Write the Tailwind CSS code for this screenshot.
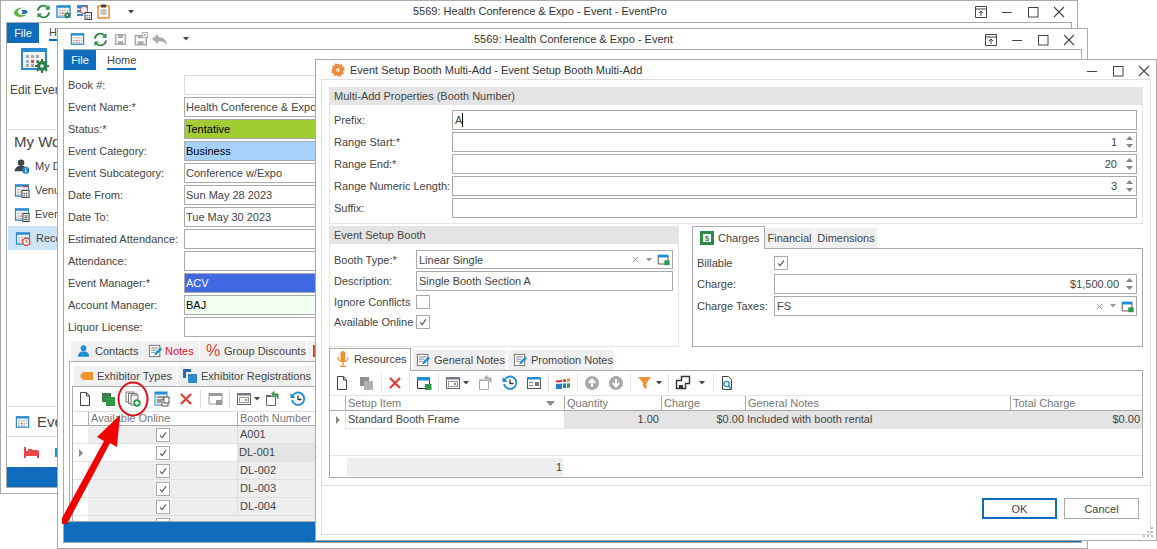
<!DOCTYPE html>
<html><head><meta charset="utf-8"><title>Event Setup Booth Multi-Add</title>
<script src="https://cdn.jsdelivr.net/npm/@tailwindcss/browser@4"></script></head>
<body class="bg-white">
<svg class="hidden" xmlns="http://www.w3.org/2000/svg">
<symbol id="cal" viewBox="0 0 16 16"><rect x="1" y="2" width="14" height="12" fill="#f4f4f4" stroke="#2a8ccf" stroke-width="1.4"/><rect x="1" y="2" width="14" height="2" fill="#2a8ccf"/><path d="M3 6h2v1.500H3zM6 6h2v1.500H6zM9 6h2v1.500H9zM12 6h1.500v1.500H12zM3 9h2v1.500H3zM9 9h2v1.500H9zM12 9h1.500v1.500H12zM3 11.500h2V13H3zM6 11.500h2V13H6zM9 11.500h2V13H9z" fill="#b8b8b8"/><path d="M6 9h2v1.500H6z" fill="#e2534e"/></symbol>
<symbol id="calgear" viewBox="0 0 16 16"><use href="#cal"/><circle cx="12" cy="12" r="2.600" fill="#2e7d46"/><path d="M12 8.500v7M8.500 12h7M9.700 9.700l4.600 4.600M14.300 9.700l-4.600 4.600" stroke="#2e7d46" stroke-width="1.200"/><circle cx="12" cy="12" r="1" fill="#fff"/></symbol>
<symbol id="calsched" viewBox="0 0 16 16"><path d="M1 1h11v3H1zM1 6h8v2H1zM1 10h6v2H1z" fill="#2a8ccf"/><path d="M1 4.500h11M1 8.500h7" stroke="#9cc9ea"/><circle cx="8" cy="6" r="3.500" fill="#fff" stroke="#e2534e" stroke-width="1.100"/><rect x="9" y="8.500" width="6.500" height="7" fill="#fff" stroke="#444"/><path d="M10.500 11h1.200v1.200h-1.200zM12.800 11H14v1.200h-1.200zM10.500 13.200h1.200v1.200h-1.200zM12.800 13.200H14v1.200h-1.200z" fill="#444"/></symbol>
<symbol id="calgrid" viewBox="0 0 16 16"><use href="#cal"/><rect x="8" y="8" width="7.500" height="7.500" fill="#fff" stroke="#444"/><path d="M9.500 10.500h1.500v1.500H9.500zM12.200 10.500h1.500v1.500h-1.500zM9.500 13h1.500v1.500H9.500zM12.200 13h1.500v1.500h-1.500z" fill="#444"/><rect x="9" y="3" width="6" height="1.500" fill="#e2342b"/></symbol>
<symbol id="callist" viewBox="0 0 16 16"><use href="#cal"/><rect x="9" y="7" width="6.500" height="8.500" fill="#fff" stroke="#333"/><path d="M10.500 9.500H14M10.500 11.500H14M10.500 13.500H14" stroke="#333"/></symbol>
<symbol id="calclock" viewBox="0 0 16 16"><use href="#cal"/><circle cx="11.500" cy="11.500" r="3.800" fill="#fff" stroke="#e2342b" stroke-width="1.300"/><path d="M11.500 9.500v2.200h2" fill="none" stroke="#e2342b"/></symbol>
<symbol id="refresh" viewBox="0 0 16 16"><path d="M2 7a6 6 0 0 1 10.300-3.300M14 9a6 6 0 0 1-10.300 3.300" fill="none" stroke="#2e8b47" stroke-width="2"/><path d="M14.500 1v5h-5zM1.500 15v-5h5z" fill="#2e8b47"/></symbol>
<symbol id="save" viewBox="0 0 16 16"><path d="M2 2h12v12H2z" fill="none" stroke="#aaa" stroke-width="1.800"/><path d="M5 2h6v4H5zM4.500 10h7v4h-7z" fill="#aaa"/></symbol>
<symbol id="savex" viewBox="0 0 16 16"><path d="M1.500 4h12.500v10.500H1.500z" fill="none" stroke="#aaa" stroke-width="1.800"/><path d="M4 4h5v3H4zM4 10.500h7v4H4z" fill="#aaa"/><rect x="9.500" y="0.500" width="6" height="6" fill="#fff" stroke="#aaa"/><path d="M11 2l3 3M14 2l-3 3" stroke="#aaa"/></symbol>
<symbol id="doc" viewBox="0 0 16 16"><path d="M3.500 1.500h6l3 3.500v9.500h-9z" fill="#fff" stroke="#444"/><path d="M9.500 1.500V5h3" fill="none" stroke="#444"/></symbol>
<symbol id="sqg" viewBox="0 0 16 16"><rect x="2" y="2" width="9" height="9" fill="#3f7f4b"/><rect x="6" y="6" width="9" height="9" fill="#2e9a48"/></symbol>
<symbol id="sqgrey" viewBox="0 0 16 16"><rect x="2" y="2" width="9" height="9" fill="#8f8f8f"/><rect x="6" y="6" width="9" height="9" fill="#b1b1b1"/></symbol>
<symbol id="multi" viewBox="0 0 16 16"><rect x="1" y="1" width="8" height="10" fill="#fff" stroke="#777"/><rect x="3.500" y="2.500" width="8" height="10" fill="#fff" stroke="#777"/><rect x="6" y="4" width="7" height="10" fill="#eee" stroke="#777"/><circle cx="12" cy="12" r="3.700" fill="#2e9a48"/><path d="M10 12h4M12 10v4" stroke="#fff" stroke-width="1.300"/></symbol>
<symbol id="calcopy" viewBox="0 0 16 16"><rect x="1" y="1" width="12" height="13" fill="#eee" stroke="#2a8ccf"/><rect x="1" y="1" width="12" height="2.500" fill="#2a8ccf"/><path d="M3 5h8v2H3zM3 8h4v4H3z" fill="#999"/><rect x="8" y="8" width="6" height="7" fill="#fff" stroke="#555"/><rect x="10" y="6" width="5" height="6" fill="#fff" stroke="#555"/></symbol>
<symbol id="x" viewBox="0 0 16 16"><path d="M3 3l10 10M13 3L3 13" stroke="#e0403a" stroke-width="2.300" fill="none"/></symbol>
<symbol id="wingrey" viewBox="0 0 16 16"><path d="M2 2.500h13V13H2z" fill="#fff" stroke="#999"/><path d="M2 2h13v3H2z" fill="#999"/><rect x="9" y="9" width="6" height="5" fill="#999"/></symbol>
<symbol id="wingreen" viewBox="0 0 16 16"><path d="M1.500 3.500h12v10h-12z" fill="#fff" stroke="#333"/><path d="M1 2h13v3.500H1z" fill="#1f8dd6"/><rect x="9" y="9" width="6.500" height="6" fill="#2e9a48"/></symbol>
<symbol id="windrop" viewBox="0 0 16 16"><rect x="1.500" y="2.500" width="13" height="11" fill="#fff" stroke="#666"/><rect x="1" y="2" width="14" height="2.500" fill="#778"/><rect x="3.500" y="6.500" width="9" height="5" fill="none" stroke="#999"/><rect x="9" y="8" width="2" height="2" fill="#888"/></symbol>
<symbol id="folder" viewBox="0 0 16 16"><path d="M1.500 5.500h9v9h-9z" fill="#fff" stroke="#666"/><path d="M1 4h5v2H1z" fill="#666"/><path d="M13 8V3H9M9 0.500L6.500 3 9 5.500z" fill="#2e9a48" stroke="#2e9a48"/></symbol>
<symbol id="folderg" viewBox="0 0 16 16"><path d="M1.500 5.500h9v9h-9z" fill="#fff" stroke="#aaa"/><path d="M1 4h5v2H1z" fill="#bbb"/><path d="M13 8V3H9M9 0.500L6.500 3 9 5.500z" fill="#aaa" stroke="#aaa"/></symbol>
<symbol id="hist" viewBox="0 0 16 16"><path d="M2.500 5A6.200 6.200 0 1 1 2 9" fill="none" stroke="#1f8dd6" stroke-width="1.800"/><path d="M0.500 2v5h5z" fill="#1f8dd6"/><path d="M8 4.500V8.500h3.500" fill="none" stroke="#333" stroke-width="1.300"/></symbol>
<symbol id="details" viewBox="0 0 16 16"><rect x="1.500" y="2.500" width="13" height="11" fill="#fff" stroke="#555"/><rect x="1" y="2" width="14" height="2.500" fill="#2a8ccf"/><path d="M3 7h4v1H3zM3 10h4v1H3zM9 7h4v4H9z" fill="#777"/></symbol>
<symbol id="blocks" viewBox="0 0 16 16"><path d="M1 9l6-.5V14H1z" fill="#2a7fc4"/><path d="M8 8.500l3-.3V13H8z" fill="#2a7fc4"/><path d="M1 7.500V5.500L7 5v2z" fill="#d9342b"/><path d="M8 7V4.500l3-.3V6.700z" fill="#d9342b"/><path d="M12 13V8.500l3-.3V12.500z" fill="#2e9a48"/><path d="M12 7V3.500l3-.3V6.500z" fill="#ee9330"/></symbol>
<symbol id="up" viewBox="0 0 16 16"><circle cx="8" cy="8" r="7" fill="#a8a8a8"/><path d="M8 12V5M4.800 8L8 4.500 11.200 8" fill="none" stroke="#fff" stroke-width="2"/></symbol>
<symbol id="down" viewBox="0 0 16 16"><circle cx="8" cy="8" r="7" fill="#a8a8a8"/><path d="M8 4v7M4.800 8L8 11.500 11.200 8" fill="none" stroke="#fff" stroke-width="2"/></symbol>
<symbol id="filter" viewBox="0 0 16 16"><path d="M1 2h13L9.500 8v6l-3.500-2V8z" fill="#ee9330"/></symbol>
<symbol id="layout" viewBox="0 0 16 16"><path d="M1.500 5.500H6.500V1.500h8v7h-4v5h-9z" fill="none" stroke="#333" stroke-width="1.400"/><path d="M4 10h4v3.500H4z" fill="#333"/></symbol>
<symbol id="search" viewBox="0 0 16 16"><path d="M3.500 1.500h6l3 3v10h-9z" fill="#fff" stroke="#444"/><circle cx="7.500" cy="9" r="2.600" fill="none" stroke="#1f8dd6" stroke-width="1.300"/><path d="M9.500 11l3 3" stroke="#1f8dd6" stroke-width="1.600"/></symbol>
<symbol id="caret" viewBox="0 0 6 4"><path d="M0 0h6L3 3.500z" fill="#444"/></symbol>
<symbol id="caretg" viewBox="0 0 6 4"><path d="M0 0h6L3 3.500z" fill="#999"/></symbol>
<symbol id="notes" viewBox="0 0 16 16"><rect x="1.500" y="1.500" width="12" height="13" fill="#fff" stroke="#666"/><path d="M3.500 4.500h8M3.500 7h6M3.500 9.500h4" stroke="#777"/><path d="M7 13l1-3 6-6 2 2-6 6z" fill="#1f8dd6"/></symbol>
<symbol id="user" viewBox="0 0 16 16"><circle cx="8" cy="4.500" r="3.500" fill="#1f8dd6"/><path d="M1 15c0-4 3-6 4.500-6.500h5C12.500 9 15 11 15 15z" fill="#1f8dd6"/></symbol>
<symbol id="userinfo" viewBox="0 0 16 16"><circle cx="7" cy="4" r="3.500" fill="#444"/><path d="M0 13c0-3 3-5 4.500-5.500h5c1 .3 2 1 2.500 2V13z" fill="#444"/><circle cx="12" cy="12" r="3.800" fill="#1f7fc4"/><path d="M12 9.800v1M12 11.500v3" stroke="#fff" stroke-width="1.200"/></symbol>
<symbol id="wbtn" viewBox="0 0 12 12"><path d="M.5.500h11v11H.5z" fill="none" stroke="#444"/><path d="M0 3h12" stroke="#444"/><path d="M6 10V5M4 7l2-2 2 2" fill="none" stroke="#444"/></symbol>
<symbol id="close" viewBox="0 0 12 12"><path d="M1 1l10 10M11 1L1 11" stroke="#444" fill="none" stroke-width="1.100"/></symbol>
<symbol id="max" viewBox="0 0 12 12"><rect x="1.500" y="1.500" width="9.500" height="9.500" fill="none" stroke="#444"/></symbol>
<symbol id="min" viewBox="0 0 12 12"><path d="M1 6.500h10" stroke="#444"/></symbol>
<symbol id="check" viewBox="0 0 14 14"><path d="M3.500 7.500l2.500 2.500 4.500-6" fill="none" stroke="#555" stroke-width="1.300"/></symbol>
</svg>

<div class="relative w-[1157px] h-[549px] overflow-hidden text-[11px] leading-[14px] text-[#444] font-['Liberation_Sans','Noto_Sans',sans-serif]">

<!-- Back window -->
<section class="absolute left-0 top-0 w-[1078px] h-[494px] bg-white border border-[#aaa] flex flex-col">
  <header class="h-[21px] relative flex items-center shrink-0">
    <svg class="w-[16px] h-[12px] ml-[12px]" viewBox="0 0 16 12"><path d="M1 7c0-4 6-6 11-5C7 2 4 4 5 7c1 2 6 3 9 1-3 4-12 4-13-1z" fill="#5bb13c"/><path d="M8 4h5l2 2-3 2H8l2-2z" fill="#1f6cb0"/></svg>
    <svg class="w-[15px] h-[15px] ml-[7px]"><use href="#refresh"/></svg>
    <svg class="w-[15px] h-[15px] ml-[5px]"><use href="#calgear"/></svg>
    <svg class="w-[16px] h-[16px] ml-[5px]"><use href="#calsched"/></svg>
    <svg class="w-[13px] h-[15px] ml-[5px]" viewBox="0 0 13 15"><rect x="1" y="2" width="11" height="12" fill="#fff" stroke="#ee8a2c" stroke-width="1.500"/><rect x="4" y="0.500" width="5" height="3" fill="#444"/><path d="M3.500 6h6M3.500 8h6M3.500 10h6" stroke="#888"/></svg>
    <svg class="w-[6px] h-[4px] ml-[18px]"><use href="#caret"/></svg>
    <span class="absolute left-[412px] top-[3px] text-[#333]">5569: Health Conference &amp; Expo - Event - EventPro</span>
    <svg class="absolute left-[974px] top-[5px] w-[12px] h-[12px]"><use href="#wbtn"/></svg>
    <svg class="absolute left-[1000px] top-[5px] w-[12px] h-[12px]"><use href="#min"/></svg>
    <svg class="absolute left-[1026px] top-[5px] w-[12px] h-[12px]"><use href="#max"/></svg>
    <svg class="absolute left-[1052px] top-[5px] w-[12px] h-[12px]"><use href="#close"/></svg>
  </header>
  <div class="flex-1 mx-[5px] mb-[5px] border border-[#aaa] flex flex-col">
    <nav class="h-[20px] flex items-center shrink-0">
      <span class="w-[32px] h-[20px] bg-[#0f6cbd] text-white flex items-center justify-center">File</span>
      <span class="ml-[10px] border-b-2 border-[#0f6cbd]">Home</span>
    </nav>
    <div class="h-[87px] border-b border-[#ddd] shrink-0 pl-[3px]">
      <svg class="w-[28px] h-[26px] ml-[11px] mt-[5px]" viewBox="0 0 28 26"><rect x="1" y="1" width="24" height="20" fill="#f2f2f2" stroke="#2a8ccf" stroke-width="2"/><rect x="1" y="1" width="24" height="3" fill="#2a8ccf"/><path d="M5 7h3v3H5zM10 7h3v3h-3zM15 7h3v3h-3zM5 12h3v3H5zM15 12h3v3h-3zM5 16h3v3H5zM10 16h3v3h-3z" fill="#aaa"/><path d="M10 12h3v3h-3z" fill="#e2534e"/><circle cx="21" cy="18" r="5" fill="#2e7d46"/><path d="M21 11v14M14 18h14M16 13l10 10M26 13L16 23" stroke="#2e7d46" stroke-width="2"/><circle cx="21" cy="18" r="1.800" fill="#fff"/></svg>
      <div class="text-[12px] mt-[9px] whitespace-nowrap">Edit Event</div>
    </div>
    <div class="text-[15px] leading-[18px] pl-[7px] mt-[3px] text-[#444]">My Work</div>
    <ul class="mt-[3px]">
      <li class="h-[24px] flex items-center pl-[7px] gap-[5px]"><svg class="w-[16px] h-[15px]"><use href="#userinfo"/></svg>My Dashboard</li>
      <li class="h-[24px] flex items-center pl-[7px] gap-[5px]"><svg class="w-[16px] h-[15px]"><use href="#calgrid"/></svg>Venue</li>
      <li class="h-[24px] flex items-center pl-[7px] gap-[5px]"><svg class="w-[16px] h-[15px]"><use href="#callist"/></svg>Events</li>
      <li class="h-[24px] flex items-center pl-[7px] gap-[5px] bg-[#cde4f6] ml-[1px]"><svg class="w-[16px] h-[15px]"><use href="#calclock"/></svg>Recent</li>
    </ul>
    <div class="mt-auto border-t border-[#ddd] h-[30px] flex items-center pl-[8px] gap-[7px] text-[15px]"><svg class="w-[15px] h-[14px]"><use href="#cal"/></svg>Event</div>
    <div class="border-t border-[#ddd] h-[31px] flex items-center pl-[17px]"><svg class="w-[15px] h-[13px]" viewBox="0 0 15 13"><path d="M0 1h2v4h2V3h4l1 1h4c1 0 2 1 2 2v6h-2v-2H2v2H0z" fill="#e8484a"/></svg><span class="w-[2px] h-[9px] bg-[#1f8dd6] ml-[16px]"></span></div>
    <div class="h-[20px] bg-[#0f6cbd] shrink-0"></div>
  </div>
</section>

<!-- Event window -->
<section class="absolute left-[57px] top-[28px] w-[1031px] h-[521px] bg-white border border-[#aaa] flex flex-col">
  <header class="h-[20px] relative flex items-center shrink-0">
    <svg class="w-[15px] h-[14px] ml-[12px]"><use href="#cal"/></svg>
    <svg class="w-[15px] h-[15px] ml-[8px]"><use href="#refresh"/></svg>
    <svg class="w-[13px] h-[13px] ml-[6px]"><use href="#save"/></svg>
    <svg class="w-[14px] h-[14px] ml-[7px]"><use href="#savex"/></svg>
    <svg class="w-[16px] h-[11px] ml-[4px]" viewBox="0 0 16 11"><path d="M0 5l6-5v3c5 0 9 3 9 8-2-3-5-4-9-4v3z" fill="#aaa"/></svg>
    <svg class="w-[6px] h-[4px] ml-[15px]"><use href="#caret"/></svg>
    <span class="absolute left-[416px] top-[3px] text-[#333]">5569: Health Conference &amp; Expo - Event</span>
    <svg class="absolute left-[927px] top-[5px] w-[12px] h-[12px]"><use href="#wbtn"/></svg>
    <svg class="absolute left-[953px] top-[5px] w-[12px] h-[12px]"><use href="#min"/></svg>
    <svg class="absolute left-[979px] top-[5px] w-[12px] h-[12px]"><use href="#max"/></svg>
    <svg class="absolute left-[1005px] top-[5px] w-[12px] h-[12px]"><use href="#close"/></svg>
  </header>
  <div class="flex-1 min-h-0 mx-[5px] mb-[5px] border border-[#aaa] flex flex-col overflow-hidden">
    <nav class="h-[20px] flex items-center shrink-0">
      <span class="w-[32px] h-[20px] bg-[#0f6cbd] text-white flex items-center justify-center">File</span>
      <span class="ml-[11px] h-[20px] leading-[20px] border-b-2 border-[#0f6cbd] px-0">Home</span>
    </nav>
    <form class="pl-[4px] pt-[5px] flex flex-col gap-[2px] shrink-0 w-[300px]">
      <div class="flex h-[20px] items-center"><label class="w-[116px]">Book #:</label><span class="w-[180px] h-[20px] border border-[#ddd]"></span></div>
      <div class="flex h-[20px] items-center"><label class="w-[116px]">Event Name:*</label><span class="w-[180px] h-[20px] border border-[#aaa] pl-[1px] whitespace-nowrap overflow-hidden leading-[18px]">Health Conference &amp; Expo</span></div>
      <div class="flex h-[20px] items-center"><label class="w-[116px]">Status:*</label><span class="w-[180px] h-[20px] border border-[#aaa] pl-[1px] leading-[18px] bg-[#a2cc33] text-black">Tentative</span></div>
      <div class="flex h-[20px] items-center"><label class="w-[116px]">Event Category:</label><span class="w-[180px] h-[20px] border border-[#aaa] pl-[1px] leading-[18px] bg-[#a6d1fb] text-black">Business</span></div>
      <div class="flex h-[20px] items-center"><label class="w-[116px]">Event Subcategory:</label><span class="w-[180px] h-[20px] border border-[#aaa] pl-[1px] leading-[18px]">Conference w/Expo</span></div>
      <div class="flex h-[20px] items-center"><label class="w-[116px]">Date From:</label><span class="w-[180px] h-[20px] border border-[#aaa] pl-[1px] leading-[18px]">Sun May 28 2023</span></div>
      <div class="flex h-[20px] items-center"><label class="w-[116px]">Date To:</label><span class="w-[180px] h-[20px] border border-[#aaa] pl-[1px] leading-[18px]">Tue May 30 2023</span></div>
      <div class="flex h-[20px] items-center"><label class="w-[116px] whitespace-nowrap">Estimated Attendance:</label><span class="w-[180px] h-[20px] border border-[#aaa]"></span></div>
      <div class="flex h-[20px] items-center"><label class="w-[116px]">Attendance:</label><span class="w-[180px] h-[20px] border border-[#aaa]"></span></div>
      <div class="flex h-[20px] items-center"><label class="w-[116px]">Event Manager:*</label><span class="w-[180px] h-[20px] border border-[#aaa] pl-[1px] leading-[18px] bg-[#4169e1] text-white">ACV</span></div>
      <div class="flex h-[20px] items-center"><label class="w-[116px]">Account Manager:</label><span class="w-[180px] h-[20px] border border-[#aaa] pl-[1px] leading-[18px] bg-[#f0fff0] text-black">BAJ</span></div>
      <div class="flex h-[20px] items-center"><label class="w-[116px]">Liquor License:</label><span class="w-[180px] h-[20px] border border-[#aaa]"></span></div>
    </form>
    <div class="flex h-[20px] mt-[4px] ml-[7px] gap-[1px] shrink-0 whitespace-nowrap">
      <span class="w-[71px] bg-[#f0f0f0] flex items-center gap-[5px] pl-[6px]"><svg class="w-[13px] h-[14px] shrink-0"><use href="#user"/></svg>Contacts</span>
      <span class="w-[56px] bg-[#f0f0f0] flex items-center gap-[3px] pl-[5px] text-[#e01030]"><svg class="w-[14px] h-[14px] shrink-0"><use href="#notes"/></svg>Notes</span>
      <span class="w-[106px] bg-[#f0f0f0] flex items-center gap-[4px] pl-[6px]"><span class="text-[#e0403a] text-[16px] w-[14px]">%</span>Group Discounts</span>
      <span class="w-[30px] bg-[#f0f0f0] flex items-center pl-[5px] ml-[1px]"><span class="w-[3px] h-[12px] bg-[#e0403a]"></span></span>
    </div>
    <div class="ml-[5px] flex-1 border border-[#aaa] pt-[4px] min-h-0 overflow-hidden flex flex-col">
      <div class="flex h-[20px] ml-[4px] gap-[2px] shrink-0 whitespace-nowrap">
        <span class="w-[102px] bg-[#f0f0f0] flex items-center gap-[4px] pl-[6px]"><svg class="w-[13px] h-[8px] shrink-0" viewBox="0 0 13 8"><path d="M0 4l3-4h10v8H3z" fill="#ee9330"/></svg>Exhibitor Types</span>
        <span class="w-[135px] bg-[#f0f0f0] flex items-center gap-[4px] pl-[5px]"><svg class="w-[14px] h-[14px] shrink-0" viewBox="0 0 14 14"><path d="M0 0h8v3H3v6H0z" fill="#1f6cb0"/><rect x="5" y="5" width="9" height="9" fill="#2a8ccf"/></svg>Exhibitor Registrations</span>
      </div>
      <div class="ml-[2px] flex-1 border-l border-t border-[#aaa] min-h-0">
        <div class="h-[25px] flex items-center border-b border-[#ddd]">
          <svg class="w-[16px] h-[16px] ml-[4px]"><use href="#doc"/></svg>
          <svg class="w-[16px] h-[16px] ml-[7px]"><use href="#sqg"/></svg>
          <svg class="w-[16px] h-[16px] ml-[9px]"><use href="#multi"/></svg>
          <svg class="w-[16px] h-[16px] ml-[13px]"><use href="#calcopy"/></svg>
          <svg class="w-[16px] h-[16px] ml-[8px]"><use href="#x"/></svg>
          <span class="w-[1px] h-[18px] bg-[#ddd] ml-[6px]"></span>
          <svg class="w-[16px] h-[16px] ml-[6px]"><use href="#wingrey"/></svg>
          <span class="w-[1px] h-[18px] bg-[#ddd] ml-[6px]"></span>
          <svg class="w-[16px] h-[16px] ml-[6px]"><use href="#windrop"/></svg>
          <svg class="w-[6px] h-[4px] ml-[2px]"><use href="#caret"/></svg>
          <svg class="w-[16px] h-[16px] ml-[5px]"><use href="#folder"/></svg>
          <svg class="w-[16px] h-[16px] ml-[9px]"><use href="#hist"/></svg>
        </div>
        <div class="grid grid-cols-[15px_149px_100px] text-[#777] h-[14px] border-b border-[#aaa] leading-[13px]"><span></span><span class="border-l border-[#aaa] pl-[2px] whitespace-nowrap">Available Online</span><span class="border-l border-[#aaa] pl-[2px]">Booth Number</span></div>
        <div class="grid grid-cols-[15px_149px_100px] h-[18px] bg-[#eee] border-b border-[#e0e0e0]"><span class="bg-white"></span><span class="flex justify-center items-center"><svg class="w-[14px] h-[14px] bg-white border border-[#aaa]"><use href="#check"/></svg></span><span class="pl-[2px] leading-[17px] border-l border-[#ddd]">A001</span></div>
        <div class="grid grid-cols-[15px_149px_100px] h-[18px] border-b border-[#e0e0e0]"><span class="text-[#888] flex items-center pl-[6px]"><svg class="w-[4px] h-[8px]" viewBox="0 0 4 8"><path d="M0 0l4 4-4 4z" fill="#888"/></svg></span><span class="flex justify-center items-center"><svg class="w-[14px] h-[14px] bg-white border border-[#aaa]"><use href="#check"/></svg></span><span class="pl-[2px] leading-[17px] bg-[#e4e4e4]">DL-001</span></div>
        <div class="grid grid-cols-[15px_149px_100px] h-[18px] bg-[#eee] border-b border-[#e0e0e0]"><span class="bg-white"></span><span class="flex justify-center items-center"><svg class="w-[14px] h-[14px] bg-white border border-[#aaa]"><use href="#check"/></svg></span><span class="pl-[2px] leading-[17px] border-l border-[#ddd]">DL-002</span></div>
        <div class="grid grid-cols-[15px_149px_100px] h-[18px] bg-[#eee] border-b border-[#e0e0e0]"><span class="bg-white"></span><span class="flex justify-center items-center"><svg class="w-[14px] h-[14px] bg-white border border-[#aaa]"><use href="#check"/></svg></span><span class="pl-[2px] leading-[17px] border-l border-[#ddd]">DL-003</span></div>
        <div class="grid grid-cols-[15px_149px_100px] h-[18px] bg-[#eee] border-b border-[#e0e0e0]"><span class="bg-white"></span><span class="flex justify-center items-center"><svg class="w-[14px] h-[14px] bg-white border border-[#aaa]"><use href="#check"/></svg></span><span class="pl-[2px] leading-[17px] border-l border-[#ddd]">DL-004</span></div>
        <div class="grid grid-cols-[15px_149px_100px] h-[18px] bg-[#eee]"><span class="bg-white"></span><span class="flex justify-center items-center"><svg class="w-[14px] h-[14px] bg-white border border-[#aaa]"><use href="#check"/></svg></span></div>
      </div>
    </div>
    <div class="h-[20px] bg-[#0f6cbd] shrink-0"></div>
  </div>
</section>

<!-- Dialog -->
<section class="absolute left-[315px] top-[59px] w-[842px] h-[482px] bg-white border border-[#aaa] flex flex-col">
  <header class="h-[19px] relative flex items-center shrink-0">
    <svg class="w-[14px] h-[14px] ml-[15px]" viewBox="0 0 14 14"><path d="M7 0l1.500 2 2.400-1 .3 2.600 2.600.3-1 2.400L14 7l-2 1.500 1 2.400-2.600.3-.3 2.600-2.400-1L7 14l-1.500-2-2.400 1-.3-2.600-2.600-.3 1-2.400L0 7l2-1.500-1-2.400 2.600-.3.3-2.600 2.400 1z" fill="#ee8a3c"/><circle cx="7" cy="7" r="2" fill="#fde2b8"/></svg>
    <span class="ml-[5px] text-[#333]">Event Setup Booth Multi-Add - Event Setup Booth Multi-Add</span>
    <svg class="absolute left-[770px] top-[5px] w-[12px] h-[12px]"><use href="#min"/></svg>
    <svg class="absolute left-[796px] top-[5px] w-[12px] h-[12px]"><use href="#max"/></svg>
    <svg class="absolute left-[822px] top-[5px] w-[12px] h-[12px]"><use href="#close"/></svg>
  </header>
  <div class="flex-1 min-h-0 mx-[5px] mb-[5px] border border-[#ddd] flex flex-col">
    <div class="px-[7px] pt-[7px]">
      <!-- Multi-add group -->
      <fieldset class="h-[137px] border border-[#e4e4e4]">
        <h2 class="h-[18px] bg-[#e4e4e4] -mx-[1px] -mt-[1px] pl-[5px] leading-[18px]">Multi-Add Properties (Booth Number)</h2>
        <div class="pl-[4px] pr-[5px] pt-[5px] flex flex-col gap-[2px]">
          <div class="flex h-[20px] items-center"><label class="w-[118px]">Prefix:</label><span class="flex-1 h-[20px] border border-[#aaa] pl-[2px] leading-[18px] flex items-center">A<i class="w-[1px] h-[14px] bg-black"></i></span></div>
          <div class="flex h-[20px] items-center"><label class="w-[118px]">Range Start:*</label><span class="flex-1 h-[20px] border border-[#aaa] flex items-center justify-end pr-[3px]">1<svg class="w-[7px] h-[14px] ml-[9px]" viewBox="0 0 7 14"><path d="M0 5l3.500-4L7 5zM0 9l3.500 4L7 9z" fill="#888"/></svg></span></div>
          <div class="flex h-[20px] items-center"><label class="w-[118px]">Range End:*</label><span class="flex-1 h-[20px] border border-[#aaa] flex items-center justify-end pr-[3px]">20<svg class="w-[7px] h-[14px] ml-[9px]" viewBox="0 0 7 14"><path d="M0 5l3.500-4L7 5zM0 9l3.500 4L7 9z" fill="#888"/></svg></span></div>
          <div class="flex h-[20px] items-center"><label class="w-[118px] whitespace-nowrap">Range Numeric Length:</label><span class="flex-1 h-[20px] border border-[#aaa] flex items-center justify-end pr-[3px]">3<svg class="w-[7px] h-[14px] ml-[9px]" viewBox="0 0 7 14"><path d="M0 5l3.500-4L7 5zM0 9l3.500 4L7 9z" fill="#888"/></svg></span></div>
          <div class="flex h-[20px] items-center"><label class="w-[118px]">Suffix:</label><span class="flex-1 h-[20px] border border-[#aaa]"></span></div>
        </div>
      </fieldset>
      <!-- Middle row -->
      <div class="flex mt-[2px] h-[122px] gap-[13px]">
        <fieldset class="w-[350px] h-[121px] border border-[#e4e4e4]">
          <h2 class="h-[18px] bg-[#e4e4e4] -mx-[1px] -mt-[1px] pl-[5px] leading-[18px]">Event Setup Booth</h2>
          <div class="pl-[4px] pr-[5px] pt-[6px] flex flex-col">
            <div class="flex h-[19px] items-center mb-[2px]"><label class="w-[82px]">Booth Type:*</label><span class="flex-1 h-[19px] border border-[#aaa] pl-[2px] flex items-center">Linear Single<svg class="w-[7px] h-[7px] ml-auto" viewBox="0 0 8 8"><path d="M1 1l6 6M7 1L1 7" stroke="#888"/></svg><svg class="w-[6px] h-[4px] ml-[7px]"><use href="#caretg"/></svg><svg class="w-[13px] h-[13px] ml-[5px] mr-[2px]"><use href="#wingreen"/></svg></span></div>
            <div class="flex h-[20px] items-center mb-[1px]"><label class="w-[82px]">Description:</label><span class="flex-1 h-[20px] border border-[#aaa] pl-[2px] leading-[18px]">Single Booth Section A</span></div>
            <div class="flex h-[20px] items-center"><label class="w-[82px] whitespace-nowrap">Ignore Conflicts</label><span class="w-[14px] h-[14px] border border-[#aaa]"></span></div>
            <div class="flex h-[20px] items-center"><label class="w-[82px] whitespace-nowrap">Available Online</label><svg class="w-[14px] h-[14px] border border-[#aaa]"><use href="#check"/></svg></div>
          </div>
        </fieldset>
        <div class="w-[451px] h-[121px] flex flex-col">
          <div class="flex h-[22px] items-end whitespace-nowrap">
            <span class="w-[73px] h-[23px] border border-b-0 border-[#aaa] flex items-center gap-[4px] pl-[7px] pb-[1px] -mb-[1px] bg-white relative"><svg class="w-[14px] h-[14px]" viewBox="0 0 14 14"><rect width="14" height="14" fill="#2e8b47"/><rect x="3" y="3" width="8" height="8" fill="#fff"/><text x="7" y="10" font-size="8" text-anchor="middle" fill="#2e8b47" font-weight="bold">$</text></svg>Charges</span>
            <span class="w-[49px] h-[20px] bg-[#f0f0f0] flex items-center justify-center">Financial</span>
            <span class="w-[62px] h-[20px] ml-[1px] bg-[#f0f0f0] flex items-center justify-center">Dimensions</span>
          </div>
          <div class="flex-1 border border-[#aaa] pl-[4px] pr-[5px] pt-[7px] flex flex-col gap-[2px]">
            <div class="flex h-[14px] items-center mb-[2px]"><label class="w-[77px]">Billable</label><svg class="w-[14px] h-[14px] border border-[#aaa]"><use href="#check"/></svg></div>
            <div class="flex h-[20px] items-center"><label class="w-[77px]">Charge:</label><span class="flex-1 h-[20px] border border-[#aaa] flex items-center justify-end pr-[3px]">$1,500.00<svg class="w-[7px] h-[14px] ml-[7px]" viewBox="0 0 7 14"><path d="M0 5l3.500-4L7 5zM0 9l3.500 4L7 9z" fill="#888"/></svg></span></div>
            <div class="flex h-[20px] items-center"><label class="w-[77px] whitespace-nowrap">Charge Taxes:</label><span class="flex-1 h-[20px] border border-[#aaa] pl-[2px] flex items-center">FS<svg class="w-[7px] h-[7px] ml-auto" viewBox="0 0 8 8"><path d="M1 1l6 6M7 1L1 7" stroke="#888"/></svg><svg class="w-[6px] h-[4px] ml-[7px]"><use href="#caretg"/></svg><svg class="w-[13px] h-[13px] ml-[5px] mr-[2px]"><use href="#wingreen"/></svg></span></div>
          </div>
        </div>
      </div>
      <!-- Resources -->
      <div class="h-[130px] flex flex-col">
        <div class="flex h-[22px] items-end whitespace-nowrap shrink-0">
          <span class="w-[82px] h-[23px] border border-b-0 border-[#aaa] flex items-center gap-[5px] pl-[7px] pb-[2px] -mb-[1px] bg-white relative"><svg class="w-[12px] h-[16px]" viewBox="0 0 12 16"><rect x="3.500" y="0" width="5" height="10" rx="2.500" fill="#ee9330"/><path d="M1 6c0 6 10 6 10 0M6 11v4M3 15.500h6" fill="none" stroke="#ee9330" stroke-width="1.300"/></svg>Resources</span>
          <span class="w-[93px] h-[20px] ml-[2px] bg-[#f0f0f0] flex items-center gap-[4px] pl-[3px]"><svg class="w-[14px] h-[14px]"><use href="#notes"/></svg>General Notes</span>
          <span class="w-[106px] h-[20px] ml-[2px] bg-[#f0f0f0] flex items-center gap-[4px] pl-[5px]"><svg class="w-[14px] h-[14px]"><use href="#notes"/></svg>Promotion Notes</span>
        </div>
        <div class="flex-1 border border-[#aaa] flex flex-col">
          <div class="h-[24px] flex items-center shrink-0">
            <svg class="w-[16px] h-[16px] ml-[4px]"><use href="#doc"/></svg>
            <svg class="w-[16px] h-[16px] ml-[8px]"><use href="#sqgrey"/></svg>
            <span class="w-[1px] h-[20px] bg-[#e4e4e4] ml-[7px]"></span>
            <svg class="w-[16px] h-[16px] ml-[5px]"><use href="#x"/></svg>
            <span class="w-[1px] h-[20px] bg-[#e4e4e4] ml-[6px]"></span>
            <svg class="w-[16px] h-[16px] ml-[6px]"><use href="#wingreen"/></svg>
            <span class="w-[1px] h-[20px] bg-[#e4e4e4] ml-[6px]"></span>
            <svg class="w-[16px] h-[16px] ml-[6px]"><use href="#windrop"/></svg>
            <svg class="w-[6px] h-[4px] ml-[2px]"><use href="#caret"/></svg>
            <svg class="w-[16px] h-[16px] ml-[9px]"><use href="#folderg"/></svg>
            <svg class="w-[16px] h-[16px] ml-[8px]"><use href="#hist"/></svg>
            <svg class="w-[16px] h-[16px] ml-[8px]"><use href="#details"/></svg>
            <span class="w-[1px] h-[20px] bg-[#e4e4e4] ml-[6px]"></span>
            <svg class="w-[16px] h-[16px] ml-[6px]"><use href="#blocks"/></svg>
            <span class="w-[1px] h-[20px] bg-[#e4e4e4] ml-[6px]"></span>
            <svg class="w-[16px] h-[16px] ml-[6px]"><use href="#up"/></svg>
            <svg class="w-[16px] h-[16px] ml-[8px]"><use href="#down"/></svg>
            <span class="w-[1px] h-[20px] bg-[#e4e4e4] ml-[6px]"></span>
            <svg class="w-[16px] h-[16px] ml-[6px]"><use href="#filter"/></svg>
            <svg class="w-[6px] h-[4px] ml-[3px]"><use href="#caret"/></svg>
            <span class="w-[1px] h-[20px] bg-[#e4e4e4] ml-[6px]"></span>
            <svg class="w-[16px] h-[16px] ml-[6px]"><use href="#layout"/></svg>
            <svg class="w-[6px] h-[4px] ml-[8px]"><use href="#caret"/></svg>
            <span class="w-[1px] h-[20px] bg-[#e4e4e4] ml-[8px]"></span>
            <svg class="w-[16px] h-[16px] ml-[5px]"><use href="#search"/></svg>
          </div>
          <div class="grid grid-cols-[15px_219px_97px_84px_265px_1fr] h-[16px] border-t border-[#e4e4e4] border-b border-b-[#aaa] text-[#777] shrink-0 whitespace-nowrap leading-[14px]">
            <span></span>
            <span class="border-l border-[#aaa] pl-[2px] flex items-center justify-between pr-[9px]">Setup Item<svg class="w-[9px] h-[5px]" viewBox="0 0 9 5"><path d="M0 0h9L4.500 5z" fill="#888"/></svg></span>
            <span class="border-l border-[#aaa] pl-[2px]">Quantity</span>
            <span class="border-l border-[#aaa] pl-[2px]">Charge</span>
            <span class="border-l border-[#aaa] pl-[2px]">General Notes</span>
            <span class="border-l border-[#aaa] pl-[2px]">Total Charge</span>
          </div>
          <div class="grid grid-cols-[15px_219px_97px_84px_265px_1fr] h-[18px] leading-[16px] shrink-0 whitespace-nowrap">
            <span class="flex items-center pl-[6px]"><svg class="w-[4px] h-[8px]" viewBox="0 0 4 8"><path d="M0 0l4 4-4 4z" fill="#888"/></svg></span>
            <span class="pl-[2px] border-b border-l border-[#e4e4e4]">Standard Booth Frame</span>
            <span class="bg-[#e4e4e4] text-right pr-[2px]">1.00</span>
            <span class="bg-[#e4e4e4] text-right pr-[1px]">$0.00</span>
            <span class="bg-[#e4e4e4] pl-[2px]">Included with booth rental</span>
            <span class="bg-[#e4e4e4] text-right pr-[2px]">$0.00</span>
          </div>
          <div class="mt-[26px] border-t border-[#e4e4e4] pt-[2px] pl-[17px]">
            <div class="w-[216px] h-[18px] bg-[#eee] text-right pr-[1px] leading-[18px]">1</div>
          </div>
        </div>
      </div>
    </div>
    <footer class="mt-[7px] border-t border-[#ddd] flex justify-end gap-[7px] pt-[12px] pr-[11px] relative flex-1">
      <button class="w-[75px] h-[21px] border-2 border-[#0f6cbd] text-center leading-[16px]">OK</button>
      <button class="w-[75px] h-[21px] border border-[#aaa] text-center leading-[18px]">Cancel</button>
    </footer>
  </div>
  <svg class="absolute right-[2px] bottom-[2px] w-[11px] h-[11px]" viewBox="0 0 11 11"><path d="M8 0h2v2H8zM8 4h2v2H8zM4 4h2v2H4zM8 8h2v2H8zM4 8h2v2H4zM0 8h2v2H0z" fill="#bbb"/></svg>
</section>

<!-- Annotation -->
<svg class="absolute left-0 top-0 w-[1157px] h-[549px] pointer-events-none" viewBox="0 0 1157 549">
  <ellipse cx="133" cy="399" rx="14.500" ry="16.500" fill="none" stroke="#e0101a" stroke-width="2"/>
  <path d="M120 415L97 437 104 441 62 518 62 524 67 524 110 443 117 447z" fill="#f00000"/>
</svg>
</div>
</body></html>
